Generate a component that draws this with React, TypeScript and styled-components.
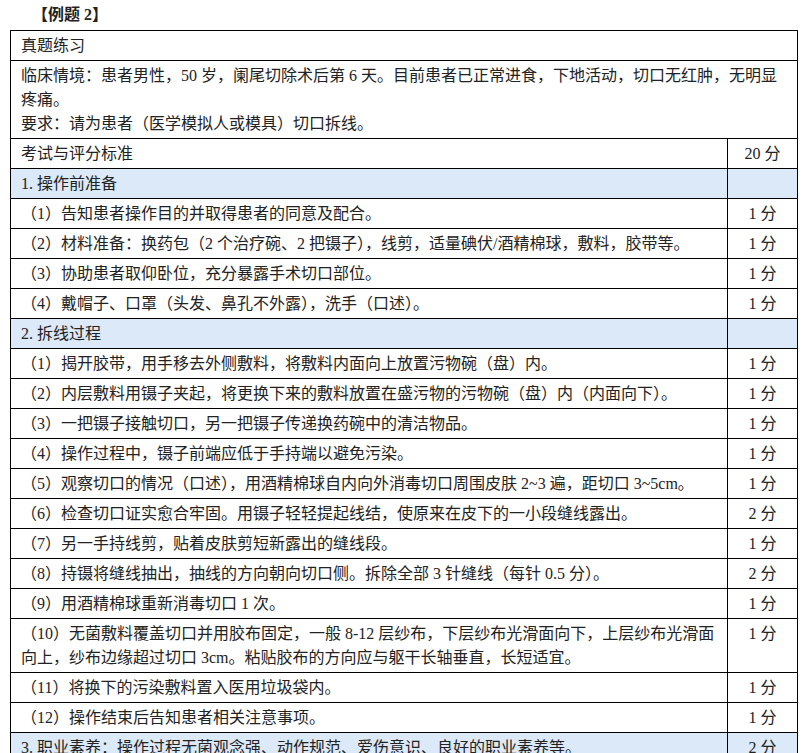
import React from "react";
import styled, { createGlobalStyle } from "styled-components";

const Global = createGlobalStyle`
  body { margin: 0; background: #fff; font-family: "Liberation Serif", "Noto Sans CJK SC", serif; color: #222; }
`;
const Page = styled.div`padding: 4px 10px 0 10px; width: 787px;`;
const Title = styled.div`font-size: 16px; font-weight: bold; height: 26px; line-height: 22px; padding-left: 22px;`;
const Table = styled.table`
  border-collapse: collapse; width: 787px; font-size: 16px; table-layout: fixed;
  td { border: 1px solid #000; padding: 2.5px 10px; line-height: 24px; vertical-align: top; }
`;
const Row = styled.tr<{ $sec?: boolean }>`
  background: ${(p) => (p.$sec ? "#dce9f8" : "#fff")};
  height: 29.4px;
`;
const Score = styled.td`text-align: center;`;

const items: [string, string, boolean?][] = [
  ["1. 操作前准备", "", true],
  ["（1）告知患者操作目的并取得患者的同意及配合。", "1 分"],
  ["（2）材料准备：换药包（2 个治疗碗、2 把镊子），线剪，适量碘伏/酒精棉球，敷料，胶带等。", "1 分"],
  ["（3）协助患者取仰卧位，充分暴露手术切口部位。", "1 分"],
  ["（4）戴帽子、口罩（头发、鼻孔不外露），洗手（口述）。", "1 分"],
  ["2. 拆线过程", "", true],
  ["（1）揭开胶带，用手移去外侧敷料，将敷料内面向上放置污物碗（盘）内。", "1 分"],
  ["（2）内层敷料用镊子夹起，将更换下来的敷料放置在盛污物的污物碗（盘）内（内面向下）。", "1 分"],
  ["（3）一把镊子接触切口，另一把镊子传递换药碗中的清洁物品。", "1 分"],
  ["（4）操作过程中，镊子前端应低于手持端以避免污染。", "1 分"],
  ["（5）观察切口的情况（口述），用酒精棉球自内向外消毒切口周围皮肤 2~3 遍，距切口 3~5cm。", "1 分"],
  ["（6）检查切口证实愈合牢固。用镊子轻轻提起线结，使原来在皮下的一小段缝线露出。", "2 分"],
  ["（7）另一手持线剪，贴着皮肤剪短新露出的缝线段。", "1 分"],
  ["（8）持镊将缝线抽出，抽线的方向朝向切口侧。拆除全部 3 针缝线（每针 0.5 分）。", "2 分"],
  ["（9）用酒精棉球重新消毒切口 1 次。", "1 分"],
  ["（10）无菌敷料覆盖切口并用胶布固定，一般 8-12 层纱布，下层纱布光滑面向下，上层纱布光滑面向上，纱布边缘超过切口 3cm。粘贴胶布的方向应与躯干长轴垂直，长短适宜。", "1 分"],
  ["（11）将换下的污染敷料置入医用垃圾袋内。", "1 分"],
  ["（12）操作结束后告知患者相关注意事项。", "1 分"],
  ["3. 职业素养：操作过程无菌观念强、动作规范、爱伤意识、良好的职业素养等。", "2 分", true],
];

export default function App() {
  return (
    <Page>
      <Global />
      <Title>【例题 2】</Title>
      <Table>
        <colgroup><col style={{ width: 717 }} /><col style={{ width: 70 }} /></colgroup>
        <tbody>
          <Row><td colSpan={2}>真题练习</td></Row>
          <Row>
            <td colSpan={2}>
              临床情境：患者男性，50 岁，阑尾切除术后第 6 天。目前患者已正常进食，下地活动，切口无红肿，无明显疼痛。<br />
              要求：请为患者（医学模拟人或模具）切口拆线。
            </td>
          </Row>
          <Row><td>考试与评分标准</td><Score>20 分</Score></Row>
          {items.map(([t, s, sec], i) => (
            <Row key={i} $sec={!!sec}><td>{t}</td><Score>{s}</Score></Row>
          ))}
        </tbody>
      </Table>
    </Page>
  );
}
